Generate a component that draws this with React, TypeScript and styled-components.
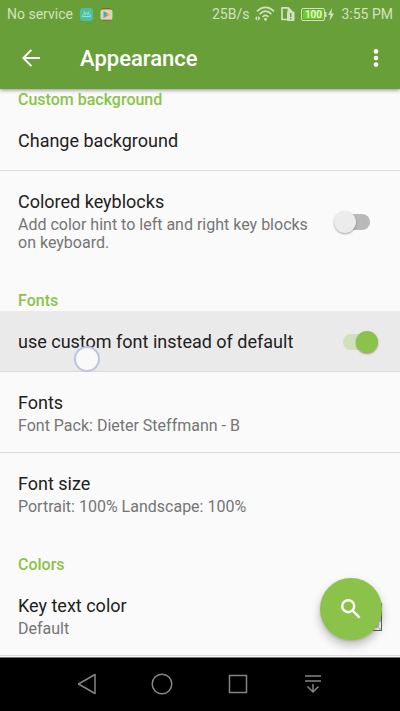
import React, { useState } from 'react';
import styled, { createGlobalStyle } from 'styled-components';

const GlobalStyle = createGlobalStyle`
  * { box-sizing: border-box; }
  body { margin: 0; background: #fafafa; }
  button, input { font: inherit; margin: 0; }
`;

const Screen = styled.div`
  min-height: 100vh;
  display: flex;
  flex-direction: column;
  background: #fafafa;
  color: #212121;
  font-family: Roboto, "Noto Sans", sans-serif;
`;

const Header = styled.header`
  background: #689f38;
  box-shadow: 0 1px 4px rgba(0, 0, 0, 0.45);
  z-index: 1;
`;

const StatusBar = styled.div`
  height: 28px;
  padding: 0 7px;
  display: flex;
  align-items: center;
  justify-content: space-between;
  color: #d2e2c3;
  font-size: 14px;
  line-height: 18px;
`;

const StatusGroup = styled.div<{ $gap: number }>`
  display: flex;
  align-items: center;
  gap: ${(p) => p.$gap}px;
  white-space: nowrap;

  svg { display: block; }
`;

const Battery = styled.span`
  display: flex;
  align-items: center;
`;

const BatteryLevel = styled.span`
  width: 24px;
  height: 13px;
  border: 1px solid #d2e2c3;
  border-radius: 2px;
  box-shadow: inset 0 0 0 1px #689f38;
  background: #70cc22;
  color: #f0f8e8;
  font-size: 10px;
  font-weight: 500;
  line-height: 11px;
  text-align: center;
`;

const Toolbar = styled.div`
  height: 61px;
  padding: 0 8px 2px 13px;
  display: flex;
  align-items: center;
`;

const IconButton = styled.button<{ $width: number }>`
  width: ${(p) => p.$width}px;
  height: 36px;
  padding: 0;
  border: 0;
  display: flex;
  align-items: center;
  justify-content: center;
  background: transparent;
  color: #fff;
  cursor: pointer;
`;

const Title = styled.h1`
  flex: 1;
  margin: 0 0 0 31px;
  padding-top: 2px;
  color: #fff;
  font-size: 22px;
  font-weight: 500;
  line-height: 28px;
`;

const Settings = styled.main`
  flex: 1;
`;

const Category = styled.h2<{ $first?: boolean }>`
  margin: 0;
  padding: ${(p) => (p.$first ? 2 : 22)}px 18px 1px;
  color: #8bc34a;
  font-size: 16px;
  font-weight: 500;
  line-height: 18px;
`;

const Row = styled.div<{ $pressed?: boolean; $divider?: boolean; $single?: boolean }>`
  position: relative;
  padding: ${(p) => (p.$single ? '20px 18px 18px' : '20px 18px 17px')};
  border-bottom: 1px solid ${(p) => (p.$divider ? '#dcdcdc' : 'transparent')};
  display: flex;
  align-items: center;
  justify-content: space-between;
  background: ${(p) => (p.$pressed ? '#eaeaea' : 'transparent')};
`;

const RowText = styled.label`
  flex: 1;
  display: flex;
  flex-direction: column;
  gap: 3px;
`;

const RowTitle = styled.span`
  font-size: 18px;
  line-height: 22px;
`;

const Summary = styled.span`
  color: #757575;
  font-size: 16px;
  line-height: 18px;
`;

const Switch = styled.input`
  appearance: none;
  flex: none;
  width: 44px;
  height: 22px;
  margin: 0 4px 0 20px;
  display: grid;
  align-items: center;
  cursor: pointer;

  &::before {
    content: "";
    grid-area: 1 / 1;
    justify-self: center;
    width: 27px;
    height: 16px;
    border-radius: 8px;
    background: #b9b9b9;
  }

  &::after {
    content: "";
    grid-area: 1 / 1;
    justify-self: start;
    width: 22px;
    height: 22px;
    border-radius: 50%;
    background: #ececec;
    box-shadow: 0 1px 2px rgba(0, 0, 0, 0.35);
  }

  &:checked::before { background: #d0dfbc; }
  &:checked::after { justify-self: end; background: #8bc34a; }
`;

const TouchPoint = styled.span`
  position: absolute;
  left: 74px;
  top: 35px;
  z-index: 1;
  width: 26px;
  height: 26px;
  border: 2px solid #bcc3e4;
  border-radius: 50%;
  background: rgba(250, 250, 250, 0.95);
  pointer-events: none;
`;

const Swatch = styled.span`
  width: 28px;
  height: 28px;
  border: 1px solid #666;
  background: conic-gradient(#fff 25%, #ccc 0 50%, #fff 0 75%, #ccc 0) 0 0 / 12px 12px;
`;

const SearchButton = styled.button`
  position: fixed;
  right: 18px;
  bottom: 71px;
  z-index: 2;
  width: 62px;
  height: 62px;
  padding: 0;
  border: 0;
  border-radius: 50%;
  display: flex;
  align-items: center;
  justify-content: center;
  background: #8bc34a;
  color: #fff;
  box-shadow: 0 5px 10px rgba(0, 0, 0, 0.25), 0 1px 3px rgba(0, 0, 0, 0.15);
  cursor: pointer;
`;

const NavBar = styled.nav`
  position: sticky;
  bottom: 0;
  height: 54px;
  padding: 0 49px 1px;
  border-top: 1px solid #777;
  display: grid;
  grid-template-columns: repeat(4, 1fr);
  justify-items: center;
  align-items: center;
  background: #000;
`;

const NavButton = styled(IconButton)`
  color: #858585;
`;

function WifiIcon() {
  return (
    <svg width="20" height="16" viewBox="0 0 20 16" fill="none" stroke="currentColor" strokeWidth="1.7">
      <path d="M2 5.4C7-.1 14-.1 19 5.4M4.6 8.2c3.6-4 8.2-4 11.8 0M7.6 10.8c2-2 3.8-2 5.8 0" />
      <circle cx="10.5" cy="13.3" r="1.5" fill="currentColor" stroke="none" />
      <path d="M0 12.3 2.2 10v4.7zM5.4 12.3 3.2 10v4.7z" fill="currentColor" stroke="none" />
    </svg>
  );
}

function SimIcon() {
  return (
    <svg width="14" height="16" viewBox="0 0 14 16">
      <path d="M1 1.8h6.3L10.5 5v8.5H1z" fill="none" stroke="currentColor" strokeWidth="1.7" strokeLinejoin="round" />
      <path d="M6.5 1.2 11.4 6H6.5z" fill="currentColor" />
      <rect x="6" y="5.5" width="7.5" height="9.5" rx="1" fill="currentColor" />
      <path d="M9.7 7v4M9.7 12v1.6" stroke="#689f38" strokeWidth="1.5" />
    </svg>
  );
}

function StatusAppIcons() {
  return (
    <>
      <svg width="13" height="13" viewBox="0 0 13 13" fill="none">
        <rect width="13" height="13" rx="3" fill="#4dbfa5" />
        <path d="M2.5 8.5C2.5 4 10.5 4 10.5 8.5zM4 3.4l1 1.6M9 3.4 8 5" stroke="#a5e0d1" />
        <path d="M4.8 6.8h1M7.3 6.8h1" stroke="#a5e0d1" />
      </svg>
      <svg width="13" height="13" viewBox="0 0 13 13">
        <path d="M2 1.5C3 .2 10 .2 11 1.5" fill="none" stroke="#b94c38" strokeWidth="1.3" />
        <rect x="0.5" y="1.5" width="12" height="10.5" rx="2.5" fill="#d5d8be" />
        <path d="M2 12.2h9" stroke="#b94c38" />
        <path d="M3.5 3v7L7 6.5z" fill="#23b4d1" />
        <path d="M3.5 3 9.8 6.5H7z" fill="#50a052" />
        <path d="M3.5 10 9.8 6.5H7z" fill="#df5b43" />
        <path d="m7.5 5.1 2.5 1.4-2.5 1.4L6.4 6.5z" fill="#edb735" />
      </svg>
    </>
  );
}

type SettingProps = {
  id: string;
  title: string;
  summary?: string;
  divider?: boolean;
  children?: React.ReactNode;
  pressed?: boolean;
};

function Setting({ id, title, summary, divider, pressed, children }: SettingProps) {
  return (
    <Row $divider={divider} $pressed={pressed} $single={!summary}>
      <RowText htmlFor={id}>
        <RowTitle>{title}</RowTitle>
        {summary && <Summary>{summary}</Summary>}
      </RowText>
      {children}
    </Row>
  );
}

export default function App() {
  const [keyblocks, setKeyblocks] = useState(false);
  const [customFont, setCustomFont] = useState(true);

  return (
    <Screen>
      <GlobalStyle />
      <Header>
        <StatusBar>
          <StatusGroup $gap={7}>
            <span>No service</span>
            <StatusAppIcons />
          </StatusGroup>
          <StatusGroup $gap={6}>
            <span>25B/s</span>
            <WifiIcon />
            <SimIcon />
            <Battery>
              <BatteryLevel>100</BatteryLevel>
              <svg width="10" height="13" viewBox="0 0 10 13" fill="currentColor">
                <path d="M0 4h1.5v5H0zM7 0 3 7h2.5L4.5 13 9 5.5H6.5z" />
              </svg>
            </Battery>
            <span>3:55 PM</span>
          </StatusGroup>
        </StatusBar>
        <Toolbar>
          <IconButton $width={36} aria-label="Back">
            <svg width="18" height="18" viewBox="0 0 18 18" fill="none" stroke="currentColor" strokeWidth="2">
              <path d="M18 9H2M9.4.9 1.3 9l8.1 8.1" />
            </svg>
          </IconButton>
          <Title>Appearance</Title>
          <IconButton $width={32} aria-label="More options">
            <svg width="6" height="18" viewBox="0 0 6 18" fill="currentColor">
              <circle cx="3" cy="2.4" r="2.3" />
              <circle cx="3" cy="9" r="2.3" />
              <circle cx="3" cy="15.6" r="2.3" />
            </svg>
          </IconButton>
        </Toolbar>
      </Header>

      <Settings>
        <Category $first>Custom background</Category>
        <Setting id="change-background" title="Change background" divider />
        <Setting
          id="keyblocks"
          title="Colored keyblocks"
          summary="Add color hint to left and right key blocks on keyboard."
        >
          <Switch
            id="keyblocks"
            type="checkbox"
            role="switch"
            checked={keyblocks}
            onChange={(e) => setKeyblocks(e.target.checked)}
          />
        </Setting>

        <Category>Fonts</Category>
        <Setting id="custom-font" title="use custom font instead of default" divider pressed>
          <Switch
            id="custom-font"
            type="checkbox"
            role="switch"
            checked={customFont}
            onChange={(e) => setCustomFont(e.target.checked)}
          />
          <TouchPoint />
        </Setting>
        <Setting id="fonts" title="Fonts" summary="Font Pack: Dieter Steffmann - B" divider />
        <Setting id="font-size" title="Font size" summary="Portrait: 100% Landscape: 100%" />

        <Category>Colors</Category>
        <Setting id="key-color" title="Key text color" summary="Default" divider>
          <Swatch />
        </Setting>
      </Settings>

      <SearchButton aria-label="Search">
        <svg width="22" height="22" viewBox="0 0 22 22" fill="none" stroke="currentColor" strokeWidth="2.4">
          <circle cx="8.2" cy="8.2" r="6" />
          <path d="m12.6 12.6 7 7" />
        </svg>
      </SearchButton>

      <NavBar>
        <NavButton $width={40} aria-label="Back">
          <svg width="20" height="22" viewBox="0 0 20 22" fill="none" stroke="currentColor" strokeWidth="1.5" strokeLinejoin="round">
            <path d="M18 1.5v19L1.5 11z" />
          </svg>
        </NavButton>
        <NavButton $width={40} aria-label="Home">
          <svg width="22" height="22" viewBox="0 0 22 22" fill="none" stroke="currentColor" strokeWidth="1.5">
            <circle cx="11" cy="11" r="9.8" />
          </svg>
        </NavButton>
        <NavButton $width={40} aria-label="Recent apps">
          <svg width="20" height="20" viewBox="0 0 20 20" fill="none" stroke="currentColor" strokeWidth="1.5" strokeLinejoin="round">
            <path d="M1.5 1.5h17v17h-17z" />
          </svg>
        </NavButton>
        <NavButton $width={40} aria-label="Notifications">
          <svg width="16" height="20" viewBox="0 0 16 20" fill="none" stroke="currentColor" strokeWidth="1.5">
            <path d="M0 2h16M0 7h16M8 10v8M2.5 12.5 8 18l5.5-5.5" />
          </svg>
        </NavButton>
      </NavBar>
    </Screen>
  );
}
